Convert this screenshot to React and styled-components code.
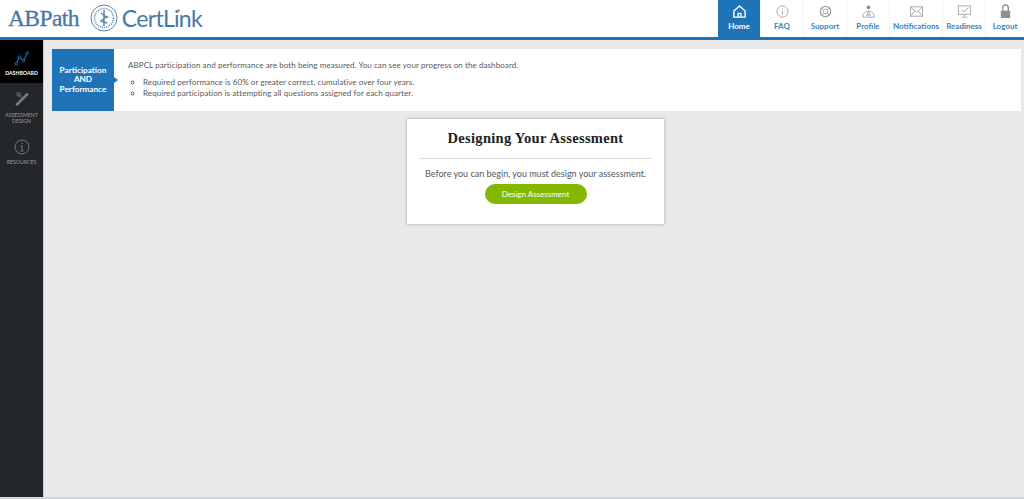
import React from "react";
import styled, { createGlobalStyle } from "styled-components";

const GlobalStyle = createGlobalStyle`
    html, body {
        margin: 0;
        padding: 0;
        height: 100%;
        overflow: hidden;
        background: #e9e9e9;
        font-family: Lato, "Liberation Sans", sans-serif;
    }
    #root {
        height: 100%;
    }
`;

const Page = styled.div`
    display: flex;
    flex-direction: column;
    height: 499px;
    border-bottom: 2px solid #d3d7da;
    box-sizing: border-box;
`;

const Header = styled.header`
    display: flex;
    justify-content: space-between;
    height: 37px;
    background: #fff;
    border-bottom: 3px solid #1f74b8;
    flex-shrink: 0;
`;

const Logo = styled.div`
    display: flex;
    align-items: center;
    padding: 0 0 1px 8px;
    color: #4a77a8;
`;

const LogoPath = styled.span`
    font-family: "Liberation Serif", serif;
    font-size: 23.5px;
    letter-spacing: -0.6px;
    -webkit-text-stroke: 0.35px #4a77a8;
`;

const LogoCert = styled.span`
    position: relative;
    font-family: Lato, sans-serif;
    font-size: 23px;
    letter-spacing: -0.7px;
    margin-left: 4px;

    &::after {
        content: "";
        position: absolute;
        left: 55.5px;
        top: 5px;
        width: 3px;
        height: 3px;
        border-radius: 50%;
        background: #8fb82a;
    }
`;

const Seal = styled.svg`
    width: 28px;
    height: 28px;
    margin-left: 11px;
`;

const Nav = styled.nav`
    display: flex;
`;

const NavItem = styled.a`
    display: flex;
    flex-direction: column;
    align-items: center;
    justify-content: flex-end;
    gap: 2px;
    box-sizing: border-box;
    width: ${(props) => props.$w}px;
    padding-bottom: 6px;
    font-size: 8px;
    font-weight: 700;
    color: ${(props) => (props.$active ? "#fff" : "#3d85b5")};
    background: ${(props) => (props.$active ? "#1f74b8" : "transparent")};
    border-left: ${(props) => (props.$active ? "none" : "1px solid #f3f3f3")};
`;

const NavIcon = styled.svg`
    width: 15px;
    height: 15px;
    fill: none;
    stroke: ${(props) => props.$color || "#a3a6a8"};
    stroke-width: ${(props) => props.$weight || 1};
`;

const Body = styled.div`
    display: flex;
    flex: 1;
    min-height: 0;
`;

const Sidebar = styled.aside`
    width: 43px;
    background: #23262b;
    border-right: 1px solid #c9cbcd;
    flex-shrink: 0;
`;

const SideItem = styled.div`
    display: flex;
    flex-direction: column;
    align-items: center;
    height: ${(props) => props.$h}px;
    padding-top: ${(props) => props.$top}px;
    box-sizing: border-box;
    background: ${(props) => (props.$active ? "#000" : "transparent")};
`;

const SideLabel = styled.span`
    margin-top: ${(props) => props.$gap}px;
    font-family: Lato, sans-serif;
    font-size: 5.2px;
    line-height: 6px;
    font-weight: ${(props) => (props.$active ? 700 : 400)};
    color: ${(props) => (props.$active ? "#fff" : "#9a9b9d")};
    text-align: center;
`;

const Main = styled.main`
    flex: 1;
    display: flex;
    flex-direction: column;
    align-items: center;
    padding: 9px 3px 0 8px;
    min-width: 0;
`;

const Banner = styled.section`
    display: flex;
    align-self: stretch;
    height: 62px;
    background: #fff;
`;

const BannerTag = styled.div`
    position: relative;
    width: 62px;
    display: flex;
    align-items: center;
    justify-content: center;
    background: #1f74b8;
    color: #fff;
    font-size: 8.2px;
    line-height: 9.6px;
    font-weight: 700;
    text-align: center;

    &::after {
        content: "";
        position: absolute;
        left: 100%;
        top: 28px;
        border-left: 4px solid #1f74b8;
        border-top: 3px solid transparent;
        border-bottom: 3px solid transparent;
    }
`;

const BannerText = styled.div`
    padding: 11px 0 0 14px;
    font-size: 8px;
    line-height: 11px;
    letter-spacing: 0.09px;
    color: #55585b;
`;

const BannerList = styled.ul`
    margin: 6px 0 0;
    padding: 0 0 0 15px;
    list-style: circle;
    line-height: 10.5px;
`;

const Card = styled.section`
    width: 257px;
    height: 105px;
    margin: 8px 2px 0 0;
    padding: 10px 12px 0;
    box-sizing: border-box;
    background: #fff;
    box-shadow: 0 0 3px rgba(0, 0, 0, 0.3);
    text-align: center;
`;

const CardTitle = styled.h2`
    margin: 0;
    padding-bottom: 10px;
    font-family: "Liberation Serif", serif;
    font-size: 14.5px;
    line-height: 19px;
    font-weight: 700;
    letter-spacing: 0.3px;
    color: #222;
    border-bottom: 1px solid #ddd;
`;

const CardText = styled.p`
    margin: 8px 0 0;
    font-size: 9px;
    line-height: 13px;
    white-space: nowrap;
    color: #55585b;
`;

const DesignButton = styled.button`
    display: block;
    width: 102px;
    height: 20px;
    margin: 4px auto 0;
    padding: 0;
    border: none;
    border-radius: 10px;
    background: #84b800;
    color: #fff;
    font-family: Lato, sans-serif;
    font-size: 8px;
`;

const navItems = [
    {
        label: "FAQ",
        w: 43,
        icon: (
            <>
                <circle cx="8" cy="8" r="6" />
                <path d="M8 4.500v1M8 7v4.500" />
            </>
        ),
    },
    {
        label: "Support",
        w: 43,
        icon: (
            <>
                <circle cx="8" cy="8" r="5.500" strokeWidth="1.500" />
                <circle cx="8" cy="8" r="2.500" />
                <path d="M4 4l2 2M12 4l-2 2M4 12l2-2M12 12l-2-2" />
            </>
        ),
    },
    {
        label: "Profile",
        w: 43,
        icon: (
            <>
                <circle cx="8" cy="3.500" r="2" fill="#8d9093" stroke="none" />
                <path d="M2 14c0-5 3-6.500 6-6.500s6 1.500 6 6.500z" />
                <path d="M8 8l-2 4h4z" />
            </>
        ),
    },
    {
        label: "Notifications",
        w: 53,
        icon: (
            <>
                <rect x="1.500" y="3" width="13" height="10" />
                <path d="M1.500 3L8 9l6.500-6M1.500 13L6 7.500M14.500 13L10 7.500" />
            </>
        ),
    },
    {
        label: "Readiness",
        w: 43,
        icon: (
            <>
                <rect x="1.500" y="2" width="13" height="9" />
                <path d="M5 6l2.500 2.500L12 3.500M8 11v2M5 14h6" />
            </>
        ),
    },
    {
        label: "Logout",
        w: 39,
        icon: (
            <>
                <rect x="3" y="7" width="10" height="8" fill="#8d9093" stroke="none" />
                <path d="M5 7V4a3 3 0 0 1 6 0v3" strokeWidth="1.500" stroke="#8d9093" />
            </>
        ),
    },
];

function App() {
    return (
        <Page>
            <GlobalStyle />
            <Header>
                <Logo>
                    <LogoPath>ABPath</LogoPath>
                    <Seal viewBox="0 0 28 28" fill="none" stroke="#5d86b3">
                        <circle cx="14" cy="14" r="13" strokeWidth="1" />
                        <circle cx="14" cy="14" r="9.500" strokeWidth="1.500" strokeDasharray="1 1" />
                        <path d="M14 6v16M11 9c3 2 3 3 6 4-3 1-3 2-6 4 2 1 4 1 6 2" strokeWidth="1.500" />
                    </Seal>
                    <LogoCert>CertLink</LogoCert>
                </Logo>
                <Nav>
                    <NavItem $active $w={42}>
                        <NavIcon viewBox="0 0 16 16" $color="#fff" $weight={1.5}>
                            <path d="M2 7.500L8 2l6 5.500V14H2zM6.500 14v-4h3v4" />
                        </NavIcon>
                        Home
                    </NavItem>
                    {navItems.map((item) => (
                        <NavItem key={item.label} $w={item.w}>
                            <NavIcon viewBox="0 0 16 16">{item.icon}</NavIcon>
                            {item.label}
                        </NavItem>
                    ))}
                </Nav>
            </Header>
            <Body>
                <Sidebar>
                    <SideItem $active $h={43} $top={11}>
                        <svg width="15" height="15" viewBox="0 0 17 17" fill="none" stroke="#2b77b8">
                            <path d="M2.500 14.500L6 7l5 4 4-9" strokeWidth="1.200" />
                            <circle cx="2.500" cy="14.500" r="1.500" fill="#000" />
                            <circle cx="6" cy="7" r="1.500" fill="#000" />
                            <circle cx="11" cy="11" r="1.500" fill="#000" />
                            <circle cx="15" cy="2.500" r="1.500" fill="#000" />
                        </svg>
                        <SideLabel $active $gap={4}>DASHBOARD</SideLabel>
                    </SideItem>
                    <SideItem $h={49} $top={8}>
                        <svg width="16" height="16" viewBox="0 0 17 18" fill="none" stroke="#77797c">
                            <path d="M2 16L15 3" strokeWidth="3" />
                            <circle cx="5" cy="4" r="2" />
                            <path d="M2 1.500l6 6" strokeWidth="1" />
                        </svg>
                        <SideLabel $gap={5}>
                            ASSESSMENT
                            <br />
                            DESIGN
                        </SideLabel>
                    </SideItem>
                    <SideItem $h={40} $top={7}>
                        <svg width="16" height="16" viewBox="0 0 16 16" fill="none" stroke="#77797c">
                            <circle cx="8" cy="8" r="7" />
                            <path d="M8 3.500v1.500M6.500 7H8v5M6.500 12h3" />
                        </svg>
                        <SideLabel $gap={4}>RESOURCES</SideLabel>
                    </SideItem>
                </Sidebar>
                <Main>
                    <Banner>
                        <BannerTag>
                            Participation
                            <br />
                            AND
                            <br />
                            Performance
                        </BannerTag>
                        <BannerText>
                            ABPCL participation and performance are both being measured. You can see your progress on the dashboard.
                            <BannerList>
                                <li>Required performance is 60% or greater correct, cumulative over four years.</li>
                                <li>Required participation is attempting all questions assigned for each quarter.</li>
                            </BannerList>
                        </BannerText>
                    </Banner>
                    <Card>
                        <CardTitle>Designing Your Assessment</CardTitle>
                        <CardText>Before you can begin, you must design your assessment.</CardText>
                        <DesignButton>Design Assessment</DesignButton>
                    </Card>
                </Main>
            </Body>
        </Page>
    );
}

export default App;
